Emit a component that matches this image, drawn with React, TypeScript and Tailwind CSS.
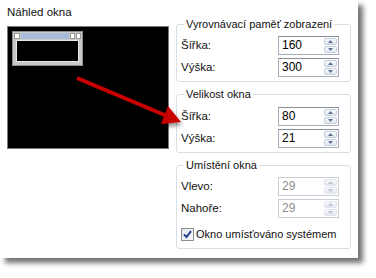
import React from "react";

function Spinner({ disabled }: { disabled?: boolean }) {
  const arrow = disabled ? "#bcc3ce" : "#5b6f93";
  const bd = disabled ? "border-[#dfe4ea]" : "border-[#c5cfdc]";
  return (
    <div className="flex flex-col w-[15px] h-full gap-[1px] p-[1px]">
      <div className={`flex-1 flex items-center justify-center border ${bd} rounded-[2px] bg-gradient-to-b from-[#f7f9fc] to-[#e2e8f0]`}>
        <svg width="5" height="3" viewBox="0 0 5 3"><path d="M0 3 L2.5 0 L5 3 Z" fill={arrow} /></svg>
      </div>
      <div className={`flex-1 flex items-center justify-center border ${bd} rounded-[2px] bg-gradient-to-b from-[#f7f9fc] to-[#e2e8f0]`}>
        <svg width="5" height="3" viewBox="0 0 5 3"><path d="M0 0 L2.5 3 L5 0 Z" fill={arrow} /></svg>
      </div>
    </div>
  );
}

function Row({ label, value, disabled }: { label: string; value: string; disabled?: boolean }) {
  return (
    <div className="flex items-center justify-between h-[19px]">
      <span className="text-[11.5px]">{label}</span>
      <div
        className={`flex h-[19px] w-[61px] border bg-white mr-[7px] ${
          disabled ? "border-[#c9ced6] text-[#8d8d8d]" : "border-[#a4adb9] border-t-[#848d99] text-black"
        }`}
      >
        <div className="flex-1 pl-[3px] leading-[17px] text-[12px]">{value}</div>
        <Spinner disabled={disabled} />
      </div>
    </div>
  );
}

function Group({ title, children, className = "" }: { title: string; children: React.ReactNode; className?: string }) {
  return (
    <fieldset className={`border border-[#d5dfe5] rounded-[3px] px-[4px] ${className}`}>
      <legend className="ml-[3px] px-[2px] leading-[14px]">{title}</legend>
      {children}
    </fieldset>
  );
}

export default function App() {
  return (
    <div className="w-[376px] h-[278px] bg-white text-[11px] text-[#111] whitespace-nowrap font-['Liberation_Sans',Arial,sans-serif]">
      <div className="relative w-[358px] h-[258px] bg-white shadow-[5px_5px_5px_rgba(0,0,0,0.55)] flex">
        <div className="flex flex-col pl-[7px] pt-[5px] w-[176px]">
          <div className="leading-[14px] text-[11.5px]">Náhled okna</div>
          <div className="mt-[7px] w-[162px] h-[123px] bg-black border border-[#7a7a7a]">
            <div className="ml-[4px] mt-[4px] w-[71px] h-[35px] border border-[#8c8c8c] bg-[#c8c8c8] flex flex-col p-[1px]">
              <div className="flex h-[6px] gap-[1px]">
                <div className="w-[6px] bg-white border border-[#9a9a9a]" />
                <div className="flex-1 bg-[#a8bbdb]" />
                <div className="w-[5px] bg-white border border-[#9a9a9a]" />
                <div className="w-[5px] bg-white border border-[#9a9a9a]" />
              </div>
              <div className="flex-1 mt-[1px] mx-[2px] mb-[2px] bg-black border border-[#e8e8e8]" />
            </div>
          </div>
        </div>
        <div className="flex flex-col w-[175px] pt-[17px] gap-[5px]">
          <Group title="Vyrovnávací paměť zobrazení" className="pb-[4px]">
            <div className="mt-[5px] flex flex-col gap-[3px]">
              <Row label="Šířka:" value="160" />
              <Row label="Výška:" value="300" />
            </div>
          </Group>
          <Group title="Velikost okna" className="pb-[4px]">
            <div className="mt-[6px] flex flex-col gap-[3px]">
              <Row label="Šířka:" value="80" />
              <Row label="Výška:" value="21" />
            </div>
          </Group>
          <Group title="Umístění okna" className="pb-[7px]">
            <div className="mt-[5px] flex flex-col gap-[3px]">
              <Row label="Vlevo:" value="29" disabled />
              <Row label="Nahoře:" value="29" disabled />
            </div>
            <div className="mt-[9px] flex items-center gap-[2px] h-[14px]">
              <div className="w-[13px] h-[13px] border border-[#8f8f8f] bg-gradient-to-br from-[#dfe6f1] to-[#f8f9fb] flex items-center justify-center">
                <svg width="9" height="9" viewBox="0 0 9 9">
                  <path d="M1 4.5 L3.5 7 L8 1.2" stroke="#25408a" strokeWidth="2" fill="none" />
                </svg>
              </div>
              <span className="text-[11px]">Okno umísťováno systémem</span>
            </div>
          </Group>
        </div>
        <svg className="absolute left-0 top-0 pointer-events-none" width="358" height="258" viewBox="0 0 358 258">
          <defs>
            <filter id="ds" x="-20%" y="-20%" width="140%" height="160%">
              <feDropShadow dx="1" dy="3" stdDeviation="2" floodColor="#000" floodOpacity="0.45" />
            </filter>
          </defs>
          <g filter="url(#ds)">
            <line x1="77" y1="78" x2="167" y2="116" stroke="#c80000" strokeWidth="4" />
            <path d="M181 122 L168 106 L161 124 Z" fill="#c80000" />
          </g>
        </svg>
      </div>
    </div>
  );
}
